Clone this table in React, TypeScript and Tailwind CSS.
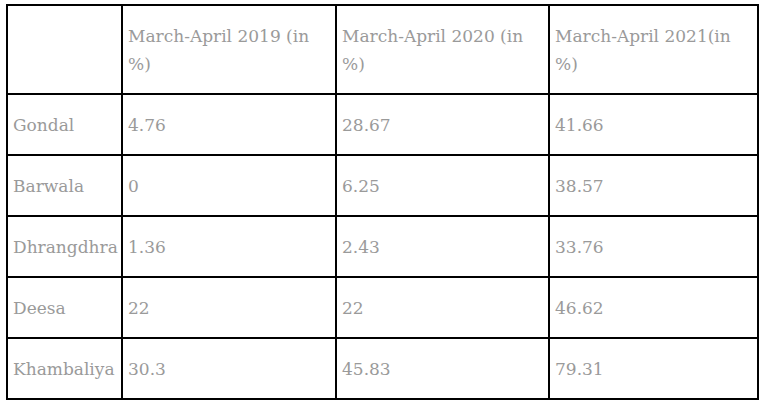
import React from 'react'

const rows = [
  ['Gondal', '4.76', '28.67', '41.66'],
  ['Barwala', '0', '6.25', '38.57'],
  ['Dhrangdhra', '1.36', '2.43', '33.76'],
  ['Deesa', '22', '22', '46.62'],
  ['Khambaliya', '30.3', '45.83', '79.31'],
]

const cell = 'border-r-2 border-b-2 border-black px-[5px] align-middle text-left font-normal'

export default function App() {
  return (
    <div className="min-h-screen bg-white pl-[6px] pt-[4px]" style={{ fontFamily: '"DejaVu Serif", serif' }}>
      <table className="border-separate border-spacing-0 border-l-2 border-t-2 border-black text-[17px] leading-[28px] text-[#9a9a9a] table-fixed w-[751px]">
        <colgroup>
          <col className="w-[115px]" />
          <col className="w-[214px]" />
          <col className="w-[213px]" />
          <col className="w-[209px]" />
        </colgroup>
        <thead>
          <tr>
            <th className={cell + ' pt-[16px] pb-[15px]'}></th>
            <th className={cell + ' pt-[16px] pb-[15px]'}>March-April 2019 (in %)</th>
            <th className={cell + ' pt-[16px] pb-[15px]'}>March-April 2020 (in %)</th>
            <th className={cell + ' pt-[16px] pb-[15px]'}>March-April 2021(in %)</th>
          </tr>
        </thead>
        <tbody>
          {rows.map((r) => (
            <tr key={r[0]}>
              {r.map((v, i) => (
                <td key={i} className={cell + ' h-[61px] py-0'}>
                  {v}
                </td>
              ))}
            </tr>
          ))}
        </tbody>
      </table>
    </div>
  )
}
